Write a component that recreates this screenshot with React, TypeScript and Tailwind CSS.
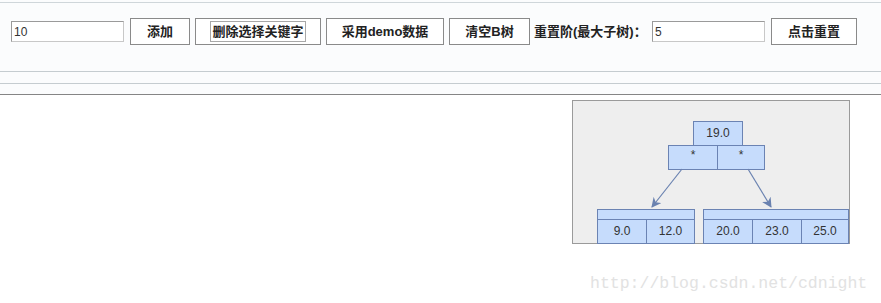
import React from "react";

const font = { fontFamily: '"Liberation Sans", "Noto Sans CJK SC", sans-serif' };

function Btn({ label, w, ml, focus }: { label: string; w: string; ml: string; focus?: boolean }) {
  return (
    <button
      className={`${w} ${ml} h-[27px] bg-white border border-[#8a8a8a] text-[13px] font-bold text-[#222] flex items-center justify-center`}
    >
      {focus ? (
        <span className="border border-[#a8a8a8] px-[1px] h-[21px] leading-[19px]">{label}</span>
      ) : (
        label
      )}
    </button>
  );
}

function Node({
  left,
  top,
  cells,
  strip,
  textTop = "pt-[4px]",
}: {
  left: string;
  top: string;
  cells: { w: string; text: string }[];
  strip?: boolean;
  textTop?: string;
}) {
  return (
    <div className={`absolute ${left} ${top} bg-[#c6dcfc] border border-[#6b83b3]`}>
      {strip && <div className="h-[10px] border-b border-[#6b83b3]" />}
      <div className="flex">
        {cells.map((c, i) => (
          <div
            key={i}
            className={`${c.w} h-[23px] ${textTop} text-center text-[12px] leading-[14px] text-[#333] ${
              i > 0 ? "border-l border-[#6b83b3]" : ""
            }`}
          >
            {c.text}
          </div>
        ))}
      </div>
    </div>
  );
}

export default function App() {
  return (
    <div className="relative w-[881px] h-[303px] bg-white overflow-hidden" style={font}>
      {/* toolbar */}
      <div className="bg-[#fbfcfd]">
        <div className="h-[2px]" />
        <div className="h-px bg-[#cfd6da]" />
        <div className="h-[68px] flex items-start pt-[15px]">
          <input
            defaultValue="10"
            className="ml-[11px] mt-[3px] w-[113px] h-[21px] bg-white border border-[#9a9a9a] border-b-[#c8c8c8] border-r-[#c8c8c8] px-[2px] text-[12px] text-[#333] outline-none"
          />
          <Btn label="添加" w="w-[60px]" ml="ml-[6px]" />
          <Btn label="删除选择关键字" w="w-[126px]" ml="ml-[5px]" focus />
          <Btn label="采用demo数据" w="w-[118px]" ml="ml-[5px]" />
          <Btn label="清空B树" w="w-[81px]" ml="ml-[5px]" />
          <span className="ml-[4px] w-[114px] h-[27px] leading-[27px] text-[13px] font-bold text-[#222]">
            重置阶(最大子树)：
          </span>
          <input
            defaultValue="5"
            className="ml-[4px] mt-[3px] w-[113px] h-[21px] bg-white border border-[#9a9a9a] border-b-[#c8c8c8] border-r-[#c8c8c8] px-[2px] text-[12px] text-[#333] outline-none"
          />
          <Btn label="点击重置" w="w-[86px]" ml="ml-[6px]" />
        </div>
        <div className="h-px bg-[#c5ccd0]" />
        <div className="h-[11px]" />
        <div className="h-px bg-[#c5ccd0]" />
        <div className="h-[10px]" />
        <div className="h-px bg-[#858585]" />
      </div>

      {/* tree panel */}
      <div className="pl-[572px] pt-[5px]">
        <div className="relative w-[278px] h-[144px] bg-[#eeeeee] border border-[#9a9a9a]">
          <Node left="left-[120px]" top="top-[20px]" cells={[{ w: "w-[48px]", text: "19.0" }]} />
          <Node
            left="left-[95px]"
            top="top-[44px]"
            textTop="pt-[2px]"
            cells={[
              { w: "w-[48px]", text: "*" },
              { w: "w-[47px]", text: "*" },
            ]}
          />
          <svg className="absolute left-0 top-0" width="278" height="144">
            <defs>
              <marker id="ah" markerWidth="10" markerHeight="10" refX="9" refY="5" orient="auto" markerUnits="userSpaceOnUse">
                <path d="M0,0 L10,5 L0,10 L3,5 Z" fill="#6a82b0" />
              </marker>
            </defs>
            <line x1="109" y1="68" x2="79" y2="106" stroke="#6a82b0" strokeWidth="1.2" markerEnd="url(#ah)" />
            <line x1="175" y1="68" x2="198" y2="106" stroke="#6a82b0" strokeWidth="1.2" markerEnd="url(#ah)" />
          </svg>
          <Node
            left="left-[24px]"
            top="top-[108px]"
            strip
            cells={[
              { w: "w-[48px]", text: "9.0" },
              { w: "w-[48px]", text: "12.0" },
            ]}
          />
          <Node
            left="left-[130px]"
            top="top-[108px]"
            strip
            cells={[
              { w: "w-[48px]", text: "20.0" },
              { w: "w-[49px]", text: "23.0" },
              { w: "w-[47px]", text: "25.0" },
            ]}
          />
        </div>
      </div>

      {/* watermark */}
      <div
        className="absolute left-[590px] top-[272px] text-[16.5px] text-[#e2e2e2]"
        style={{ fontFamily: '"Liberation Mono", monospace' }}
      >
        http://blog.csdn.net/cdnight
      </div>
    </div>
  );
}
